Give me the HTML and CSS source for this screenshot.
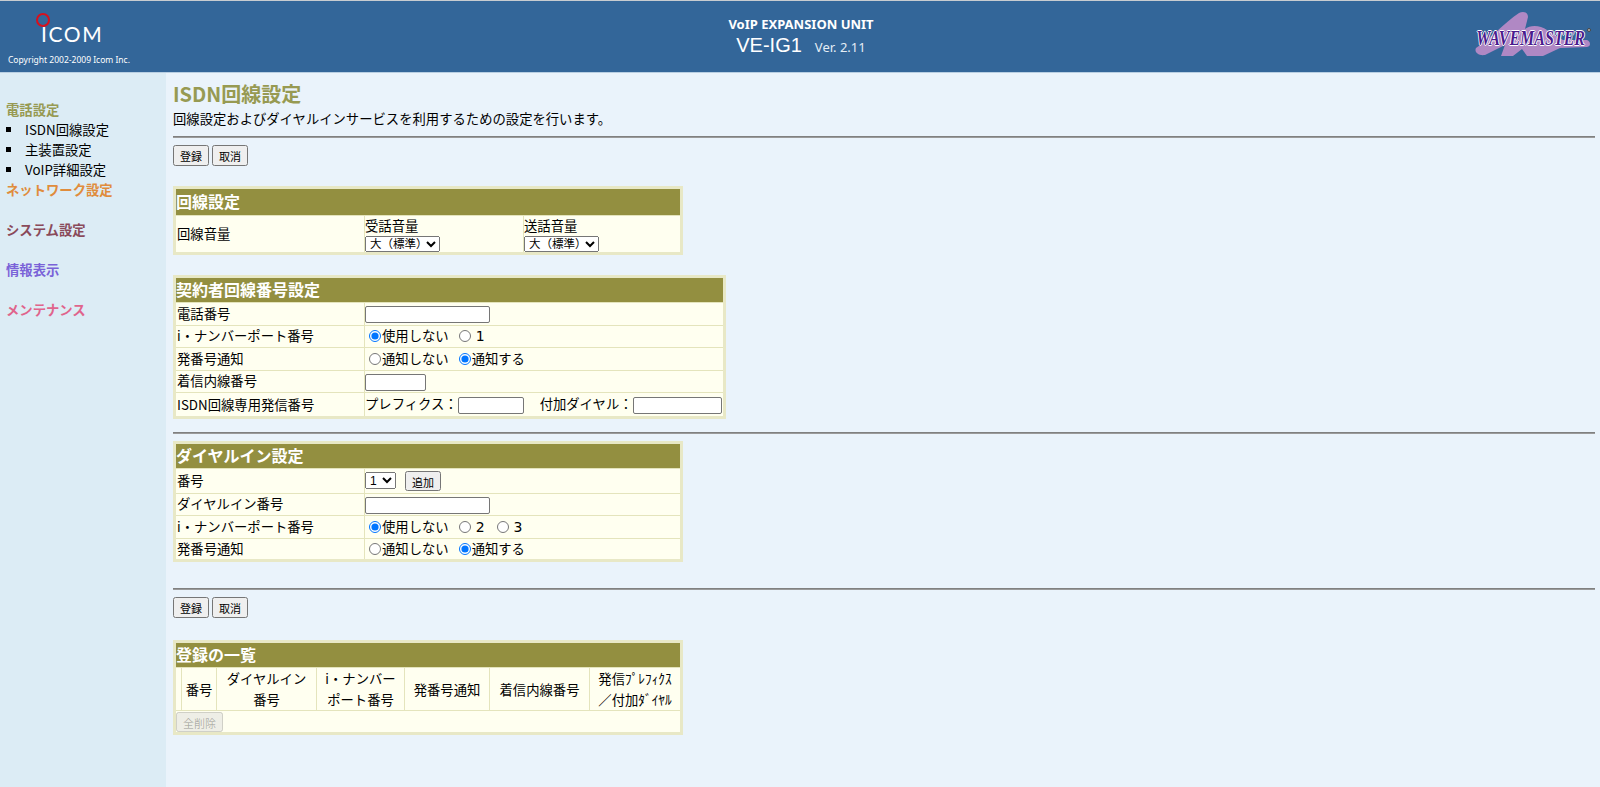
FILE: index.html
```html
<!DOCTYPE html>
<html lang="ja">
<head>
<meta charset="utf-8">
<title>VE-IG1</title>
<link rel="stylesheet" href="styles.css">
</head>
<body>
<header class="top">
  <div class="brand">
    <div class="logo"><span class="ring"></span><span class="logo-text">ICOM</span></div>
    <div class="copy">Copyright 2002-2009 Icom Inc.</div>
  </div>
  <div class="product">
    <div class="unit">VoIP EXPANSION UNIT</div>
    <div class="model"><span class="model-name">VE-IG1</span><span class="ver">Ver. 2.11</span></div>
  </div>
  <div class="wave">
    <svg class="blob" width="116" height="45" viewBox="0 0 116 45"><path d="M44 1 C48 -1 53 0 53 5 L50 17 C55 13 65 13 72 18 L88 28 L112 28 C116 30 116 34 112 35 L85 36 L68 44 L52 44 L47 37 L38 44 L26 44 L30 33 L10 43 C3 44 -1 40 1 36 C14 28 30 10 44 1 Z"/></svg>
    <span class="wave-text">WAVEMASTER</span><span class="wave-dot"></span>
  </div>
</header>
<div class="page">
  <nav class="side">
    <div class="nav-h tel">電話設定</div>
    <ul class="nav-list">
      <li>ISDN回線設定</li>
      <li>主装置設定</li>
      <li>VoIP詳細設定</li>
    </ul>
    <div class="nav-h net">ネットワーク設定</div>
    <div class="nav-h sys">システム設定</div>
    <div class="nav-h info">情報表示</div>
    <div class="nav-h maint">メンテナンス</div>
  </nav>
  <main class="main">
    <h1 class="title">ISDN回線設定</h1>
    <p class="desc">回線設定およびダイヤルインサービスを利用するための設定を行います。</p>
    <hr class="rule">
    <div class="actions"><button>登録</button><button>取消</button></div>

    <table class="panel w510 first">
      <colgroup><col class="c-label"><col class="c-mid"><col></colgroup>
      <tr><th colspan="3" class="head">回線設定</th></tr>
      <tr class="tall">
        <td>回線音量</td>
        <td>受話音量<br><select class="vol"><option>大（標準）</option></select></td>
        <td>送話音量<br><select class="vol"><option>大（標準）</option></select></td>
      </tr>
    </table>

    <table class="panel w553">
      <colgroup><col class="c-label"><col></colgroup>
      <tr><th colspan="2" class="head">契約者回線番号設定</th></tr>
      <tr><td>電話番号</td><td><input class="in-l" type="text"></td></tr>
      <tr><td>i・ナンバーポート番号</td><td class="radios"><label><input type="radio" name="a" checked>使用しない</label><label><input type="radio" name="a"><span class="num">1</span></label></td></tr>
      <tr><td>発番号通知</td><td class="radios"><label><input type="radio" name="b">通知しない</label><label><input type="radio" name="b" checked>通知する</label></td></tr>
      <tr><td>着信内線番号</td><td><input class="in-m" type="text"></td></tr>
      <tr class="row-pre"><td>ISDN回線専用発信番号</td><td class="pre">プレフィクス：<input class="in-s" type="text"><span class="add">付加ダイヤル：</span><input class="in-a" type="text"></td></tr>
    </table>

    <hr class="rule mid">

    <table class="panel w510 third">
      <colgroup><col class="c-label"><col></colgroup>
      <tr><th colspan="2" class="head">ダイヤルイン設定</th></tr>
      <tr class="row-num"><td>番号</td><td><select class="numsel"><option>1</option></select><button class="addbtn">追加</button></td></tr>
      <tr><td>ダイヤルイン番号</td><td><input class="in-l" type="text"></td></tr>
      <tr><td>i・ナンバーポート番号</td><td class="radios"><label><input type="radio" name="c" checked>使用しない</label><label class="wide"><input type="radio" name="c"><span class="num">2</span></label><label><input type="radio" name="c"><span class="num">3</span></label></td></tr>
      <tr><td>発番号通知</td><td class="radios"><label><input type="radio" name="d">通知しない</label><label><input type="radio" name="d" checked>通知する</label></td></tr>
    </table>

    <hr class="rule low">
    <div class="actions"><button>登録</button><button>取消</button></div>

    <table class="panel w510 list">
      <colgroup><col class="l0"><col class="l1"><col class="l2"><col class="l3"><col class="l4"><col class="l5"><col></colgroup>
      <tr><th colspan="7" class="head">登録の一覧</th></tr>
      <tr class="cols">
        <td></td><td>番号</td><td>ダイヤルイン<br>番号</td><td>i・ナンバー<br>ポート番号</td><td>発番号通知</td><td>着信内線番号</td><td>発信ﾌﾟﾚﾌｨｸｽ<br>／付加ﾀﾞｲﾔﾙ</td>
      </tr>
      <tr><td colspan="7" class="foot"><button disabled>全削除</button></td></tr>
    </table>
  </main>
</div>
</body>
</html>
```

FILE: styles.css
```css
* { box-sizing: border-box; }
html, body { margin: 0; height: 100%; overflow: hidden; }
body {
  font-family: "Noto Sans CJK JP", "Noto Sans", sans-serif;
  font-size: 14px;
  color: #000;
  background: #eaf3fb;
  display: flex;
  flex-direction: column;
}
.top {
  height: 73px;
  flex: none;
  background: #336699;
  border-top: 1px solid #c8ccd0;
  border-bottom: 1px solid #b9cfe2;
  display: grid;
  grid-template-columns: 1fr 1fr 1fr;
  color: #fff;
}
.brand { position: relative; padding: 0 0 0 8px; }
.logo { position: relative; height: 48px; }
.ring {
  position: absolute;
  left: 28px;
  top: 12px;
  width: 14px;
  height: 14px;
  border: 2px solid #d8101c;
  border-radius: 50%;
}
.logo-text {
  position: absolute;
  left: 33px;
  top: 20px;
  font-family: "Lato", "Liberation Sans", sans-serif;
  font-weight: 400;
  font-size: 21px;
  line-height: 26px;
  letter-spacing: 1.6px;
}
.copy {
  font-family: "Noto Sans", sans-serif;
  font-size: 8.5px;
  line-height: 14px;
  margin-top: 4px;
  white-space: nowrap;
}
.product { text-align: center; padding: 14px 0 0 2px; }
.unit { font-family: "Noto Sans", sans-serif; font-weight: 700; font-size: 13px; line-height: 18px; }
.model { line-height: 26px; margin-top: -1px; }
.model-name { font-family: "Liberation Sans", sans-serif; font-size: 20px; }
.ver { font-family: "Noto Sans", sans-serif; font-size: 13px; margin-left: 13px; color: #e4edf5; }
.wave { position: relative; }
.blob { position: absolute; right: 9px; top: 11px; fill: #b088c4; }
.wave-text {
  position: absolute;
  right: 15px;
  top: 27px;
  font-family: "Liberation Serif", serif;
  font-weight: 700;
  font-style: italic;
  font-size: 20px;
  line-height: 20px;
  color: #4b1b8e;
  transform: scaleX(0.8);
  transform-origin: right center;
  text-shadow: 1px 0 0 #fff, -1px 0 0 #fff, 0 1px 0 #fff, 0 -1px 0 #fff;
}
.wave-dot {
  position: absolute;
  right: 9px;
  top: 27px;
  width: 4px;
  height: 4px;
  border-radius: 50%;
  background: #bbb;
  border: 1px solid #444;
}
.page { flex: 1; display: flex; min-height: 0; }
.side {
  width: 166px;
  flex: none;
  background: #dcecf5;
  padding-top: 27px;
}
.nav-h {
  font-weight: 700;
  font-size: 13.33px;
  line-height: 20px;
  padding-left: 6px;
  margin-bottom: 20px;
}
.tel { color: #979a52; margin-bottom: 0; }
.net { color: #e08c3c; }
.sys { color: #8a4a5a; }
.info { color: #7a62d8; }
.maint { color: #e0648c; }
.nav-list { margin: 0; padding: 0; list-style: none; }
.nav-list li {
  position: relative;
  font-size: 13.33px;
  line-height: 20px;
  padding-left: 25px;
}
.nav-list li::before {
  content: "";
  position: absolute;
  left: 6px;
  top: 7px;
  width: 5px;
  height: 5px;
  background: #000;
}
.main { flex: 1; min-width: 0; padding: 6px 5px 0 7px; }
.title {
  margin: 0;
  font-size: 20px;
  line-height: 30px;
  font-weight: 700;
  color: #979a52;
}
.desc { margin: 0; font-size: 13.33px; line-height: 19px; }
.rule { margin: 8px 0 0; border: 0; border-top: 1px solid #808080; border-bottom: 1px solid #9a9a9a; height: 2px; }
.actions { margin-top: 7px; display: flex; gap: 3px; padding-left: 0; }
button {
  font-family: inherit;
  font-size: 11px;
  height: 21px;
  padding: 0 5px;
  line-height: 18px;
}
.panel {
  border-collapse: collapse;
  table-layout: fixed;
  margin-left: 0;
  background: #fffff0;
  border: 3px solid #e8e8c6;
  font-size: 13.33px;
}
.panel td {
  border: 1px solid #e4e4bc;
  padding: 0 1px;
  height: 22.5px;
  line-height: 18px;
  white-space: nowrap;
  overflow: hidden;
}
.panel td + td { padding-left: 0; }
.head {
  background: #938f40;
  color: #fff;
  text-align: left;
  font-size: 16px;
  line-height: 22px;
  height: 26px;
  padding: 0 0 2px;
  font-weight: 700;
}
.w510 { width: 510px; }
.w553 { width: 553px; margin-top: 20px; }
.first { margin-top: 20px; }
.first .head { height: 28px; }
.third { margin-top: 7px; }
.mid { margin-top: 13px; }
.low { margin-top: 26px; }
.list { margin-top: 22px; }
.c-label { width: 190px; }
.c-mid { width: 159px; }
.panel .tall td { height: 38px; line-height: 20px; }
.vol { width: 75px; height: 16px; font-size: 11.5px; font-family: "Liberation Sans", "Noto Sans CJK JP", sans-serif; padding: 0; display: block; }
.numsel { width: 31px; height: 17px; font-size: 12px; font-family: "Liberation Sans", sans-serif; padding: 0; vertical-align: middle; }
.addbtn { height: 20px; padding: 0 5px; margin-left: 9px; vertical-align: middle; }
input[type="text"] { height: 17px; padding: 0 2px; vertical-align: middle; border: 1px solid #767676; border-radius: 2px; background: #fff; }
.in-l { width: 125px; }
.in-m { width: 61px; }
.in-s { width: 66px; }
.in-a { width: 89px; }
.add { margin-left: 16px; }
.panel .row-pre td { height: 25px; }
.panel .row-num td { height: 24.5px; }
.radios label { margin-right: 6px; }
.radios .wide { margin-right: 8px; }
.radios input { margin: 0 1px 0 4px; vertical-align: -1px; width: 12px; height: 12px; }
.num { font-family: "DejaVu Sans", sans-serif; margin-left: 4px; font-size: 14px; }
.l0 { width: 7px; }
.l1 { width: 35px; }
.l2 { width: 100px; }
.l3 { width: 88px; }
.l4 { width: 85px; }
.l5 { width: 100px; }
.panel .cols td { text-align: center; height: 43px; line-height: 21px; padding: 0; }
.panel .foot { height: 23px; padding: 0; }
.foot button { height: 20px; padding: 0 5px; }
```
